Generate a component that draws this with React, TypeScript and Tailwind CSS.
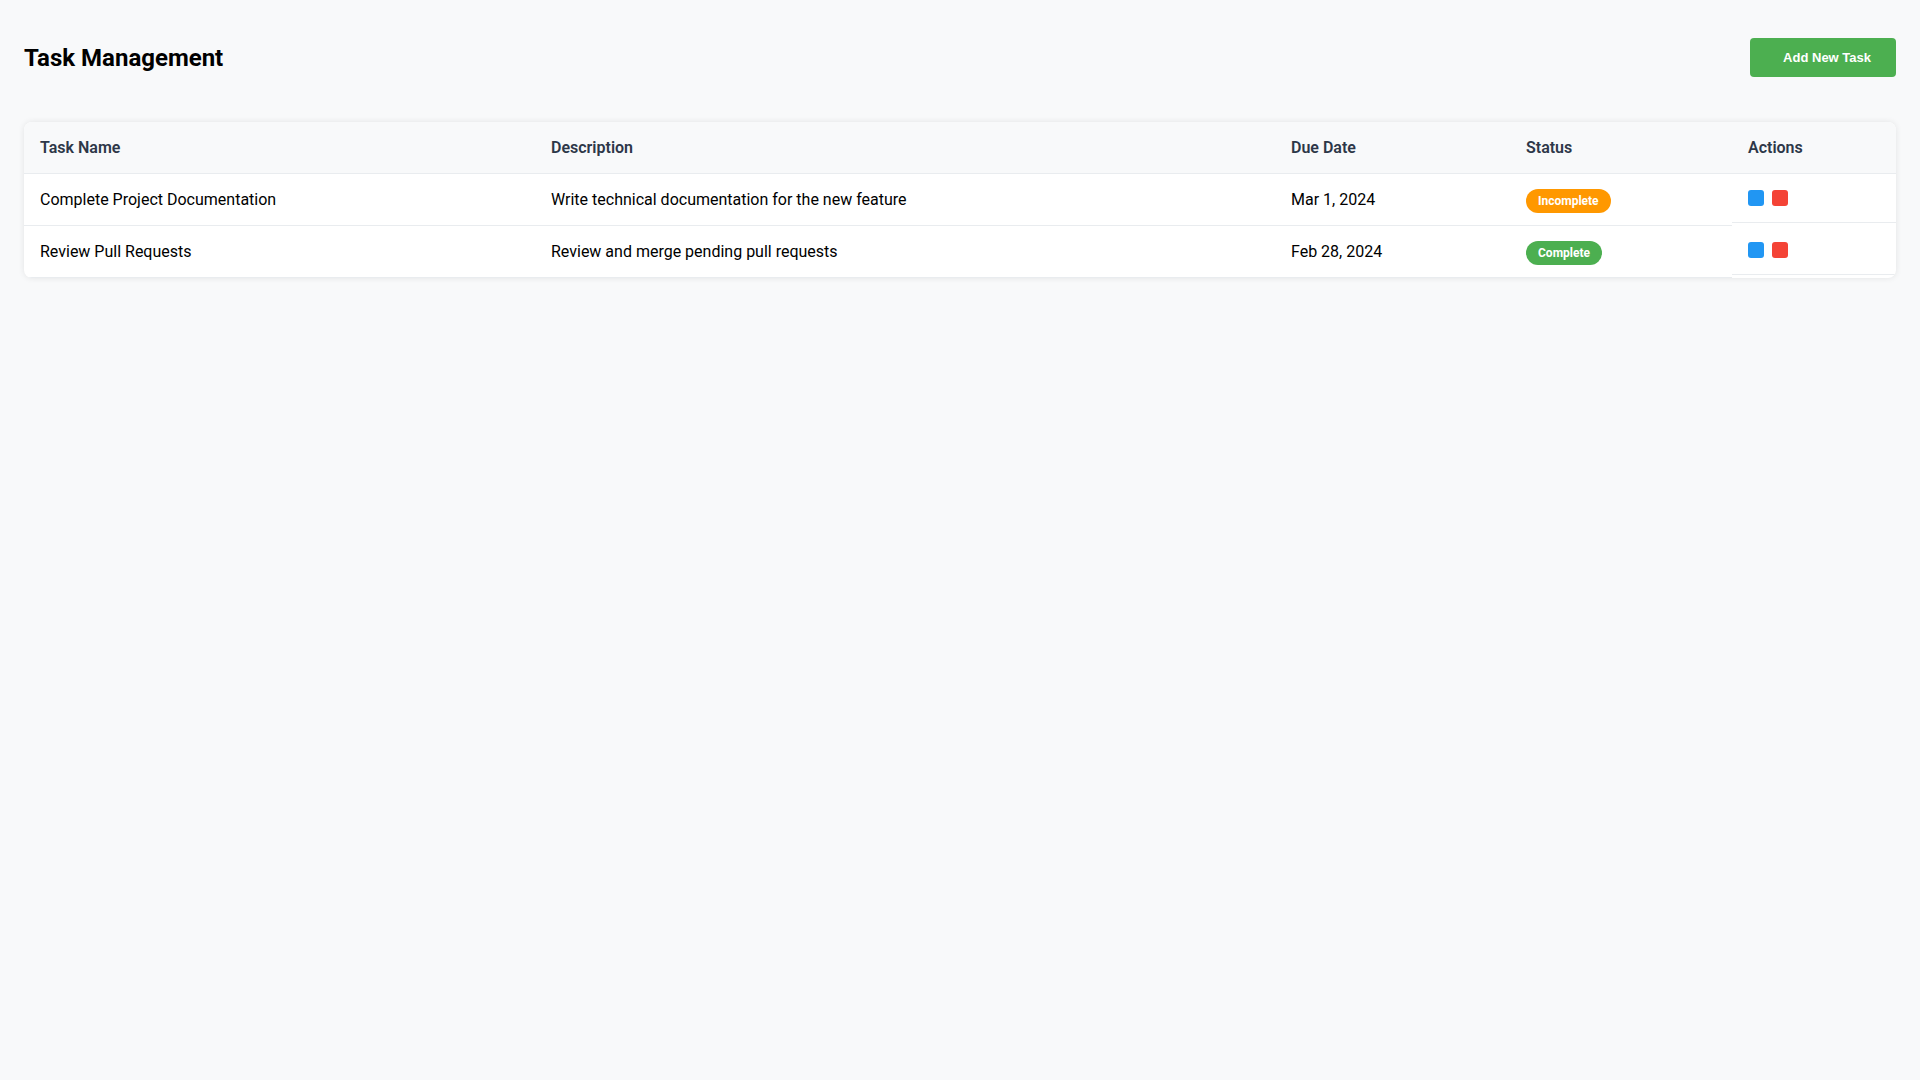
import React from "react";

type Task = {
  id: number;
  name: string;
  description: string;
  dueDate: string;
  completed: boolean;
};

const tasks: Task[] = [
  {
    id: 1,
    name: "Complete Project Documentation",
    description: "Write technical documentation for the new feature",
    dueDate: "Mar 1, 2024",
    completed: false,
  },
  {
    id: 2,
    name: "Review Pull Requests",
    description: "Review and merge pending pull requests",
    dueDate: "Feb 28, 2024",
    completed: true,
  },
];

export default function App() {
  return (
    <div className="min-h-screen bg-[#f8f9fa] px-6 pt-[38px] font-['Roboto',sans-serif] leading-[normal] text-black">
      {/* HEADER */}
      <div className="flex items-center justify-between mb-[45px]">
        <h1 className="text-2xl font-bold leading-none">Task Management</h1>
        <button className="h-[39px] pl-[33px] pr-[25px] rounded bg-[#4caf50] text-white text-[13px] font-bold font-['Liberation_Sans',Arial,sans-serif] cursor-pointer">
          Add New Task
        </button>
      </div>

      {/* TABLE */}
      <div className="bg-white rounded-lg overflow-hidden shadow-[0_0_6px_rgba(0,0,0,0.09)]">
        <table className="w-full table-fixed border-collapse text-left">
          <thead>
            <tr className="bg-[#f8f9fa]">
              <th className="w-[511px] p-4 font-semibold text-[#2d3748] border-b border-[#e9ecef]">Task Name</th>
              <th className="w-[740px] p-4 font-semibold text-[#2d3748] border-b border-[#e9ecef]">Description</th>
              <th className="w-[235px] p-4 font-semibold text-[#2d3748] border-b border-[#e9ecef]">Due Date</th>
              <th className="w-[222px] p-4 font-semibold text-[#2d3748] border-b border-[#e9ecef]">Status</th>
              <th className="p-4 font-semibold text-[#2d3748] border-b border-[#e9ecef]">Actions</th>
            </tr>
          </thead>
          <tbody>
            {tasks.map((task) => (
              <tr key={task.id}>
                <td className="p-4 border-b border-[#e9ecef]">{task.name}</td>
                <td className="p-4 border-b border-[#e9ecef]">{task.description}</td>
                <td className="p-4 border-b border-[#e9ecef]">{task.dueDate}</td>
                <td className="p-4 border-b border-[#e9ecef]">
                  {task.completed ? (
                    <span className="px-3 py-[5px] rounded-full bg-[#4caf50] text-white text-xs leading-[normal] font-bold">
                      Complete
                    </span>
                  ) : (
                    <span className="px-3 py-[5px] rounded-full bg-[#ff9800] text-white text-xs leading-[normal] font-bold">
                      Incomplete
                    </span>
                  )}
                </td>
                <td className="flex gap-2 p-4 border-b border-[#e9ecef]">
                  <button className="w-4 h-4 rounded-[3px] bg-[#2196f3] cursor-pointer" />
                  <button className="w-4 h-4 rounded-[3px] bg-[#f44336] cursor-pointer" />
                </td>
              </tr>
            ))}
          </tbody>
        </table>
      </div>
    </div>
  );
}
